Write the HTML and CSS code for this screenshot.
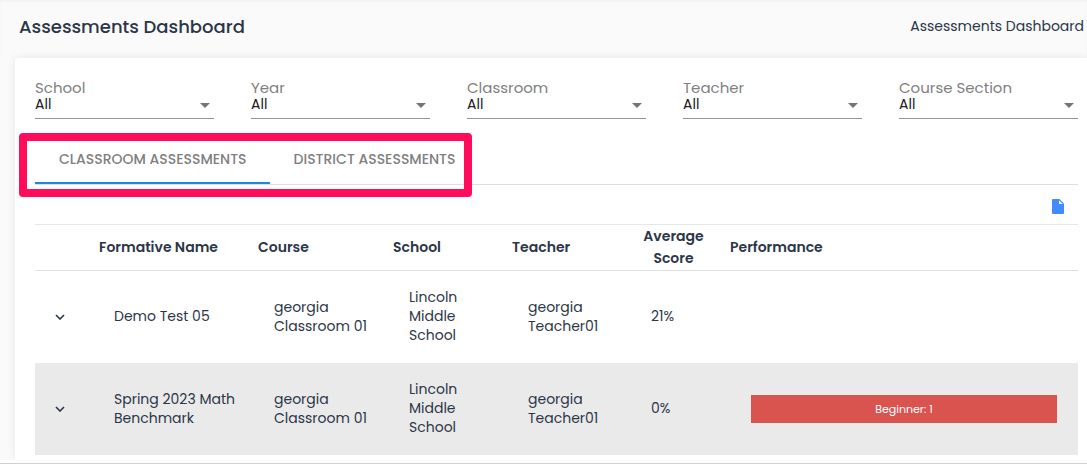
FILE: index.html
```html
<!DOCTYPE html>
<html lang="en">
<head>
    <meta charset="UTF-8">
    <meta name="viewport" content="width=device-width, initial-scale=1.0">
    <title>Assessments Dashboard</title>
    <link rel="stylesheet" href="styles.css">
</head>
<body>
    <header class="page-header">
        <h1>Assessments Dashboard</h1>
        <span class="breadcrumb">Assessments Dashboard</span>
    </header>

    <main class="card">
        <form class="filters">
            <div class="field">
                <label for="school">School</label>
                <select id="school"><option>All</option></select>
            </div>
            <div class="field">
                <label for="year">Year</label>
                <select id="year"><option>All</option></select>
            </div>
            <div class="field">
                <label for="classroom">Classroom</label>
                <select id="classroom"><option>All</option></select>
            </div>
            <div class="field">
                <label for="teacher">Teacher</label>
                <select id="teacher"><option>All</option></select>
            </div>
            <div class="field">
                <label for="section">Course Section</label>
                <select id="section"><option>All</option></select>
            </div>
        </form>

        <div class="tabs">
            <button type="button" class="tab active">CLASSROOM ASSESSMENTS</button>
            <button type="button" class="tab">DISTRICT ASSESSMENTS</button>
            <div class="highlight"></div>
        </div>

        <div class="toolbar">
            <button type="button" class="export" aria-label="Export">
                <svg width="12" height="15" viewBox="0 0 12 15">
                    <path fill="#448aff" d="M1 0h6.500L12 4.500V14a1 1 0 0 1-1 1H1a1 1 0 0 1-1-1V1a1 1 0 0 1 1-1z"/>
                    <path fill="#fff" d="M7 1.200V5h3.800z"/>
                </svg>
            </button>
        </div>

        <table>
            <colgroup>
                <col class="col-toggle">
                <col class="col-name">
                <col class="col-course">
                <col class="col-school">
                <col class="col-teacher">
                <col class="col-score">
                <col>
            </colgroup>
            <thead>
                <tr>
                    <th></th>
                    <th>Formative Name</th>
                    <th>Course</th>
                    <th>School</th>
                    <th>Teacher</th>
                    <th class="score">Average Score</th>
                    <th>Performance</th>
                </tr>
            </thead>
            <tbody>
                <tr>
                    <td class="toggle">
                        <button type="button" aria-label="Expand">
                            <svg width="10" height="6" viewBox="0 0 10 6"><path d="M1 1l4 4 4-4"/></svg>
                        </button>
                    </td>
                    <td>Demo Test 05</td>
                    <td>georgia Classroom 01</td>
                    <td>Lincoln Middle School</td>
                    <td>georgia Teacher01</td>
                    <td class="score">21%</td>
                    <td></td>
                </tr>
                <tr>
                    <td class="toggle">
                        <button type="button" aria-label="Expand">
                            <svg width="10" height="6" viewBox="0 0 10 6"><path d="M1 1l4 4 4-4"/></svg>
                        </button>
                    </td>
                    <td>Spring 2023 Math Benchmark</td>
                    <td>georgia Classroom 01</td>
                    <td>Lincoln Middle School</td>
                    <td>georgia Teacher01</td>
                    <td class="score">0%</td>
                    <td class="performance"><div class="bar">Beginner: 1</div></td>
                </tr>
            </tbody>
        </table>
    </main>

    <footer class="page-footer"></footer>
</body>
</html>
```

FILE: styles.css
```css
* {
    box-sizing: border-box;
}

body {
    margin: 0;
    background: #fafafa;
    color: #2c3648;
    font-family: Poppins, Inter, sans-serif;
    font-size: 14px;
    line-height: 19px;
}

button {
    padding: 0;
    border: none;
    background: none;
    font-family: inherit;
    cursor: pointer;
}

.page-header {
    display: flex;
    justify-content: space-between;
    align-items: center;
    height: 58px;
    padding: 0 3px 5px 19px;
    box-shadow: inset 0 2px 2px #f3f3f3;
}

h1 {
    margin: 0;
    font-size: 18px;
    font-weight: 500;
}

.breadcrumb {
    font-size: 14px;
}

.card {
    margin-left: 15px;
    padding: 21px 9px 5px 20px;
    background: #fff;
    border-radius: 4px 0 0 0;
    box-shadow: 0 0 10px rgba(0, 0, 0, 0.08);
}

/* filters */
.filters {
    display: grid;
    grid-template-columns: repeat(5, 1fr);
    column-gap: 37px;
}

.field {
    position: relative;
    display: flex;
    flex-direction: column;
    border-bottom: 1px solid #949494;
}

.field label {
    color: #808080;
    font-size: 15px;
    line-height: 17px;
}

.field select {
    height: 22px;
    padding: 0 0 7px;
    appearance: none;
    border: none;
    background: none;
    color: #212121;
    font-family: inherit;
    font-size: 14px;
    line-height: 16px;
}

.field::after {
    content: "";
    position: absolute;
    right: 4px;
    bottom: 10px;
    border: 5px solid transparent;
    border-top-color: #757575;
    border-bottom: none;
}

/* tabs */
.tabs {
    position: relative;
    display: flex;
    margin-top: 17px;
    border-bottom: 1px solid #dfdfdf;
}

.tab {
    height: 48px;
    padding: 0 23px 0 24px;
    border-bottom: 2px solid transparent;
    color: #808080;
    font-size: 14px;
    font-weight: 500;
    white-space: nowrap;
}

.tab.active {
    border-bottom-color: #1e88e5;
}

.highlight {
    position: absolute;
    top: -3px;
    left: -16px;
    width: 453px;
    height: 64px;
    border: 8px solid #ff0c5a;
    border-radius: 4px;
    pointer-events: none;
}

.toolbar {
    display: flex;
    justify-content: flex-end;
    align-items: center;
    height: 39px;
    padding: 3px 14px 0 0;
}

.export svg {
    display: block;
}

/* table */
table {
    width: 100%;
    table-layout: fixed;
    border-collapse: collapse;
}

.col-toggle { width: 64px; }
.col-name { width: 159px; }
.col-course { width: 135px; }
.col-school { width: 119px; }
.col-teacher { width: 131px; }
.col-score { width: 87px; }

th {
    height: 46px;
    padding: 0 0 1px;
    border-top: 1px solid #e4e8eb;
    border-bottom: 1px solid #dfdfdf;
    font-weight: 600;
    line-height: 22px;
    text-align: left;
}

th.score {
    padding-right: 26px;
    text-align: center;
}

td {
    height: 92px;
    padding: 0 16px;
}

td:nth-child(2) {
    padding: 0 8px 0 15px;
}

tbody tr:nth-child(even) {
    background: #eaeaea;
}

td.toggle {
    padding: 0 20px 2px;
}

.toggle svg {
    display: block;
    fill: none;
    stroke: #2c3648;
    stroke-width: 1.6;
}

td.score {
    padding: 0 8px;
}

td.performance {
    padding: 0 21px;
}

.bar {
    background: #d9534f;
    color: #fff;
    font-size: 11px;
    line-height: 28px;
    text-align: center;
}

.page-footer {
    position: relative;
    height: 4px;
    background: #fff;
    border-bottom: 1px solid #d0d0d0;
}
```
